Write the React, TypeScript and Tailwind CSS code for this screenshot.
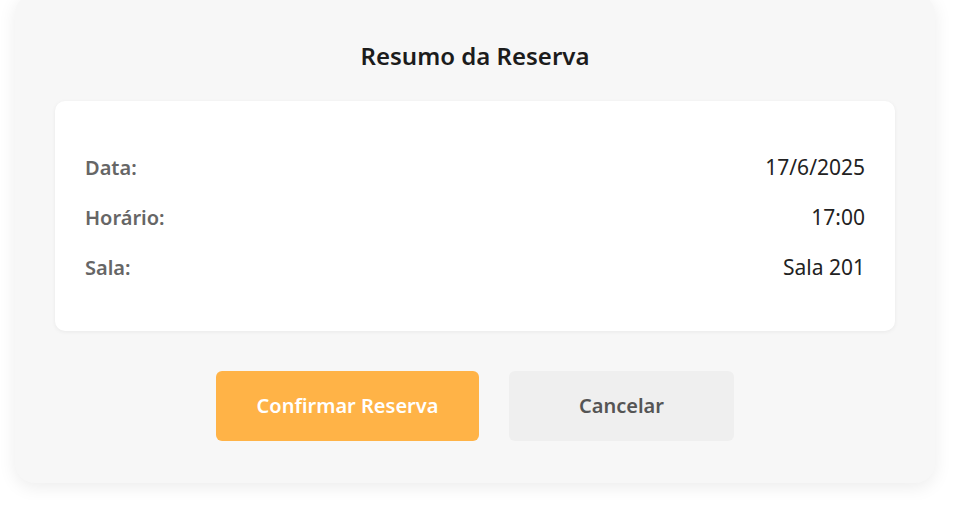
const rows = [
  { label: 'Data:', value: '17/6/2025' },
  { label: 'Horário:', value: '17:00' },
  { label: 'Sala:', value: 'Sala 201' },
];

export default function App() {
  return (
    <div className="min-h-screen bg-white px-[15px] font-['Noto_Sans',sans-serif]">
      <div className="mt-[-6px] w-[920px] rounded-[20px] bg-[#f7f7f7] pt-[46px] pb-[42px] shadow-[0_4px_18px_rgba(0,0,0,0.08)]">
        <h2 className="text-center text-[24px] font-semibold leading-[32px] text-[#1c1c1c]">
          Resumo da Reserva
        </h2>

        <div className="mx-[40px] mt-[29px] rounded-[10px] bg-white px-[30px] pt-[42px] pb-[38px] shadow-[0_1px_4px_rgba(0,0,0,0.06)]">
          {rows.map((r) => (
            <div key={r.label} className="flex h-[50px] items-center justify-between">
              <span className="text-[20px] font-semibold text-[#666]">{r.label}</span>
              <span className="text-[21px] text-[#222]">{r.value}</span>
            </div>
          ))}
        </div>

        <div className="mt-[40px] flex justify-center gap-[30px]">
          <button className="h-[70px] w-[263px] rounded-[6px] bg-[#ffb347] text-[20px] font-semibold text-white">
            Confirmar Reserva
          </button>
          <button className="h-[70px] w-[225px] rounded-[6px] bg-[#efefef] text-[20px] font-semibold text-[#555]">
            Cancelar
          </button>
        </div>
      </div>
    </div>
  );
}
